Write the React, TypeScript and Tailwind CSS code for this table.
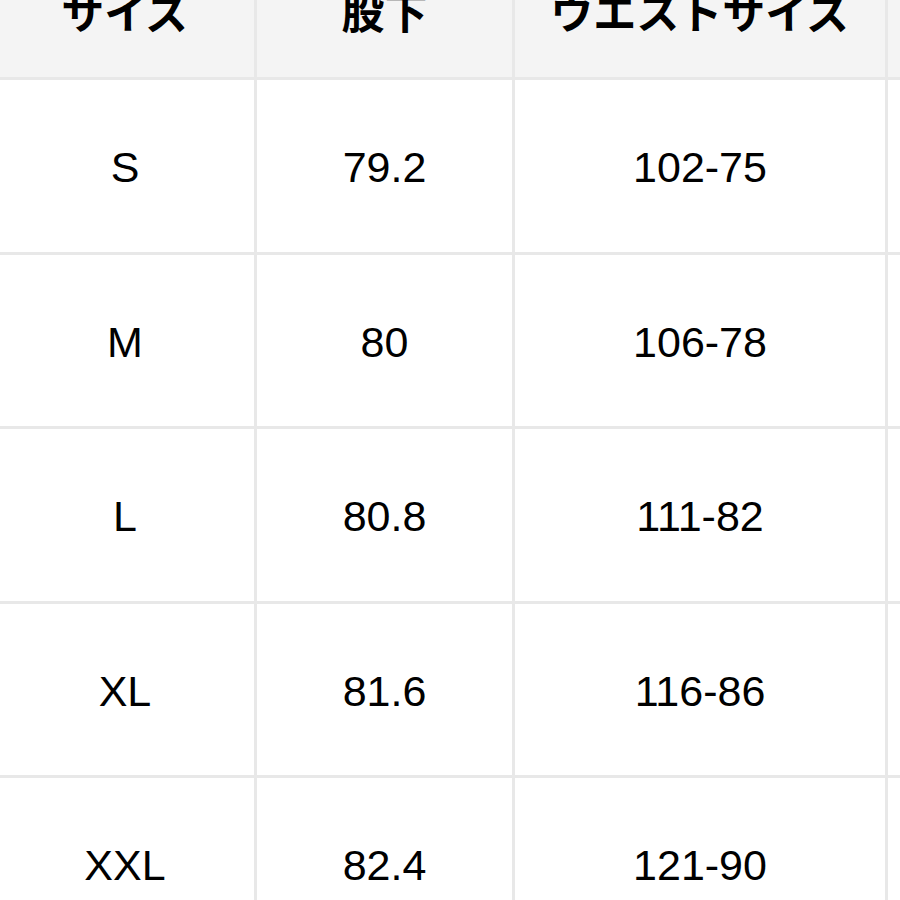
const rows = [
  ["S", "79.2", "102-75"],
  ["M", "80", "106-78"],
  ["L", "80.8", "111-82"],
  ["XL", "81.6", "116-86"],
  ["XXL", "82.4", "121-90"],
];

const cell = "flex items-center justify-center border-r-[3px] border-b-[3px] border-[#e8e8e8]";

export default function App() {
  return (
    <div className="w-[900px] h-[900px] overflow-hidden bg-white">
      <div
        className="grid grid-cols-[261px_258px_373px_200px] ml-[-4px] mt-[-57px] text-black"
        style={{ fontFamily: '"Liberation Sans", Arial, sans-serif' }}
      >
        {/* Header */}
        {["サイズ", "股下", "ウエストサイズ", ""].map((h, i) => (
          <div
            key={i}
            className={`${cell} h-[137px] bg-[#f4f4f4] text-[43px] font-bold`}
            style={{ fontFamily: '"Noto Sans CJK JP", sans-serif' }}
          >
            {h}
          </div>
        ))}

        {/* Body */}
        {rows.map((r) => (
          <>
            {r.map((v, i) => (
              <div key={r[0] + i} className={`${cell} h-[174.5px] text-[43px] pt-[3px]`}>
                {v}
              </div>
            ))}
            <div key={r[0] + "x"} className={`${cell} h-[174.5px]`} />
          </>
        ))}
      </div>
    </div>
  );
}
